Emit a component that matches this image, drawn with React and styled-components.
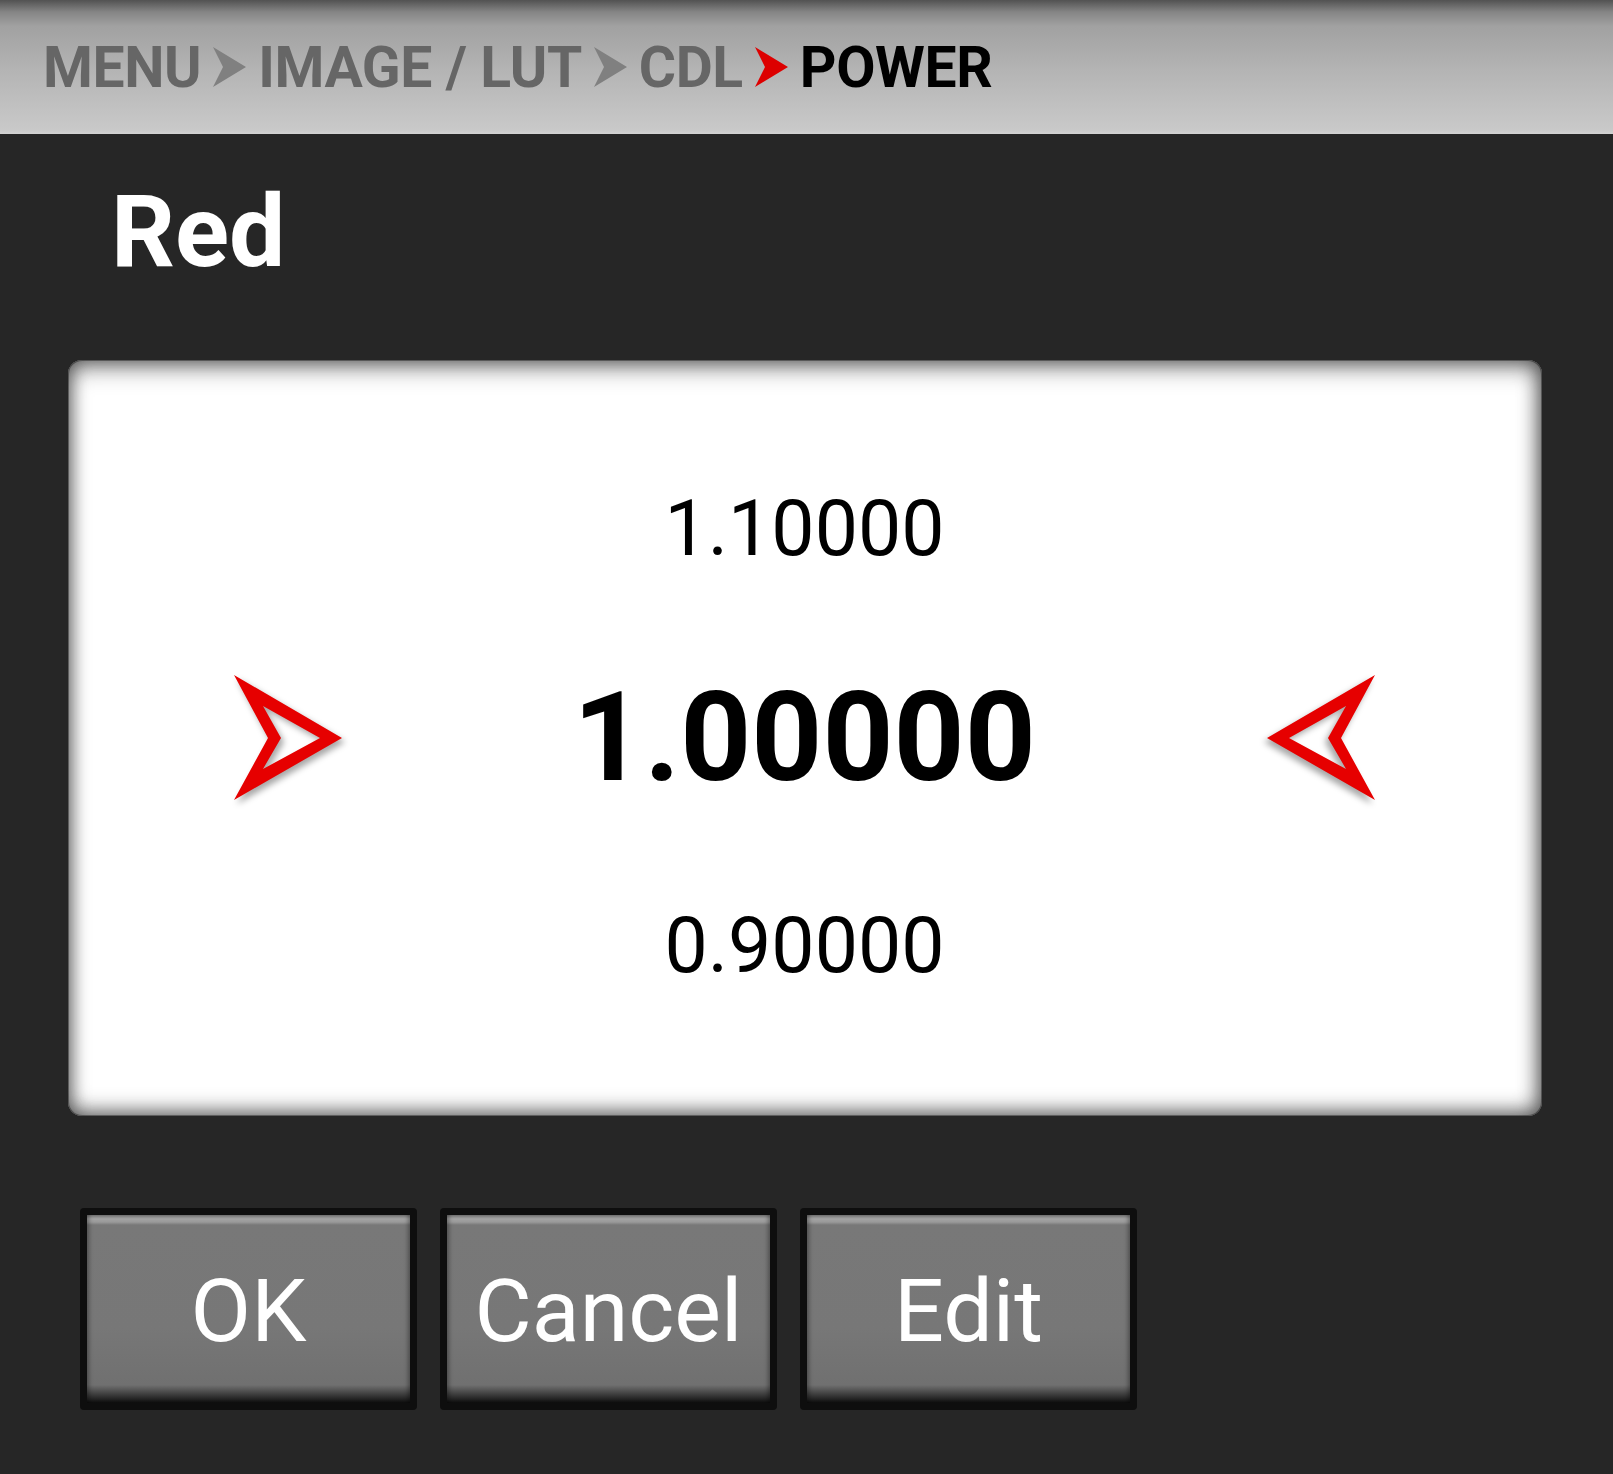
import React from "react";
import styled, { createGlobalStyle } from "styled-components";

const Global = createGlobalStyle`
  html, body { margin: 0; padding: 0; background: #262626; }
  body { font-family: Roboto, "Liberation Sans", sans-serif; }
  #root { min-height: 100vh; }
`;

const Screen = styled.div`
  width: 1613px;
  min-height: 1474px;
  background: #262626;
  display: flex;
  flex-direction: column;
`;

const Header = styled.header`
  height: 134px;
  box-sizing: border-box;
  padding-left: 43px;
  display: flex;
  align-items: center;
  gap: 12px;
  background: linear-gradient(
    #525252 0px,
    #858585 12px,
    #a1a1a1 26px,
    #b4b4b4 70px,
    #c9c9c9 130px,
    #d2d2d2 134px
  );
`;

const Crumb = styled.span`
  font-family: Roboto, "Liberation Sans", sans-serif;
  font-weight: 700;
  font-size: 57px;
  line-height: 1;
  letter-spacing: -0.4px;
  color: ${(p) => (p.$active ? "#000" : "#666")};
`;

const Chevron = ({ color }) => (
  <svg width="33" height="40" viewBox="0 0 33 40">
    <path d="M0 0 L33 20 L0 40 L10 20 Z" fill={color} />
  </svg>
);

const Title = styled.h1`
  margin: 0;
  padding: 48px 0 0 111px;
  font-family: Roboto, "Liberation Sans", sans-serif;
  font-weight: 700;
  font-size: 100px;
  line-height: 1;
  color: #fff;
  height: 100px;
`;

const Panel = styled.section`
  margin: 78px 71px 0 68px;
  height: 756px;
  box-sizing: border-box;
  background: #fff;
  border-radius: 14px;
  box-shadow: inset 0 10px 22px rgba(0, 0, 0, 0.34),
    inset -6px 0 20px rgba(0, 0, 0, 0.3),
    inset 0 -8px 20px rgba(0, 0, 0, 0.3),
    inset 4px 0 16px rgba(0, 0, 0, 0.2),
    inset 0 0 0 1px rgba(0, 0, 0, 0.35);
  display: flex;
  align-items: center;
  justify-content: space-between;
  padding: 0 167px 0 166px;
`;

const ArrowBox = styled.div`
  width: 108px;
  height: 126px;
  filter: drop-shadow(3px 4px 3px rgba(0, 0, 0, 0.35));
  transform: ${(p) => (p.$flip ? "scaleX(-1)" : "none")};
`;

const Arrow = ({ flip }) => (
  <ArrowBox $flip={flip}>
    <svg width="108" height="126" viewBox="0 0 108 126">
      <path
        fillRule="evenodd"
        fill="#e60000"
        d="M0 0 L108 63 L0 125 L34 63 Z M29 31 L86 63 L29 94 L47 63 Z"
      />
    </svg>
  </ArrowBox>
);

const Values = styled.div`
  display: flex;
  flex-direction: column;
  align-items: center;
  gap: 108px;
  margin-top: 0;
`;

const Value = styled.div`
  font-family: Roboto, "Liberation Sans", sans-serif;
  font-weight: ${(p) => (p.$current ? 700 : 400)};
  font-size: ${(p) => (p.$current ? "124px" : "77px")};
  line-height: 1;
  color: #000;
`;

const ButtonRow = styled.div`
  display: flex;
  gap: 23px;
  padding: 92px 0 0 80px;
`;

const Button = styled.button`
  width: 337px;
  height: 202px;
  box-sizing: border-box;
  padding: 7px;
  border: none;
  border-radius: 4px;
  background: #0e0e0e;
  display: flex;
  cursor: pointer;
`;

const ButtonFace = styled.span`
  flex: 1;
  display: flex;
  align-items: center;
  justify-content: center;
  font-family: Roboto, "Liberation Sans", sans-serif;
  font-weight: 400;
  font-size: 88px;
  line-height: 1;
  color: #fff;
  background: linear-gradient(
    #7a7a7a 0px,
    #a2a2a2 4px,
    #9a9a9a 7px,
    #787878 10px,
    #777777 60%,
    #707070 170px,
    #3a3a3a 180px,
    #0e0e0e 188px
  );
  box-shadow: inset 4px 0 4px -2px rgba(0, 0, 0, 0.35),
    inset -4px 0 4px -2px rgba(0, 0, 0, 0.35);
  padding-top: 4px;
`;

export default function App() {
  return (
    <Screen>
      <Global />
      <Header>
        <Crumb>MENU</Crumb>
        <Chevron color="#808080" />
        <Crumb>IMAGE / LUT</Crumb>
        <Chevron color="#808080" />
        <Crumb>CDL</Crumb>
        <Chevron color="#dd0000" />
        <Crumb $active>POWER</Crumb>
      </Header>
      <Title>Red</Title>
      <Panel>
        <Arrow />
        <Values>
          <Value>1.10000</Value>
          <Value $current>1.00000</Value>
          <Value>0.90000</Value>
        </Values>
        <Arrow flip />
      </Panel>
      <ButtonRow>
        <Button>
          <ButtonFace>OK</ButtonFace>
        </Button>
        <Button>
          <ButtonFace>Cancel</ButtonFace>
        </Button>
        <Button>
          <ButtonFace>Edit</ButtonFace>
        </Button>
      </ButtonRow>
    </Screen>
  );
}
